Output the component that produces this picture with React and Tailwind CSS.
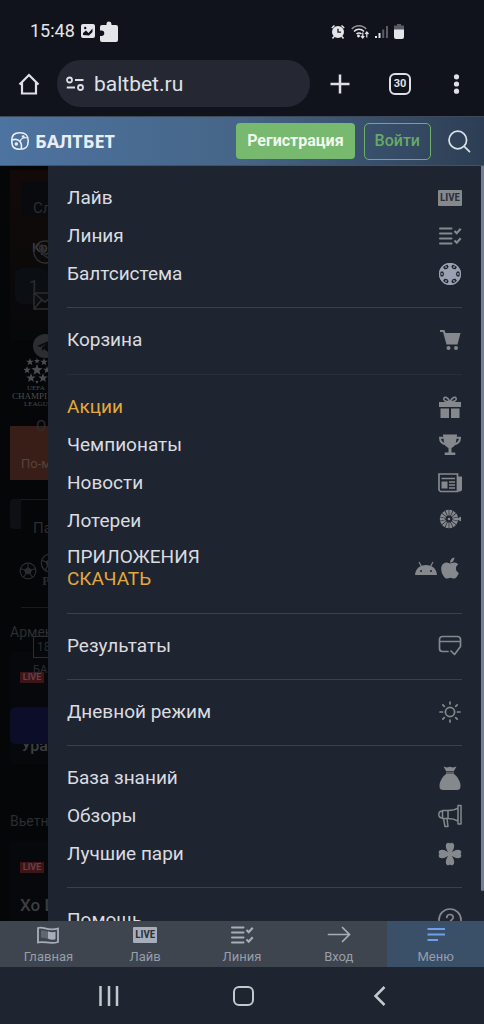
import React from 'react';
import { FaApple } from 'react-icons/fa';
import { clsx } from 'clsx';

const LiveIcon = () => (
    <span className="flex h-4 w-6 items-center justify-center rounded-[1px] bg-current">
        <span className="font-['Liberation_Sans_Narrow','Roboto_Condensed',Roboto,sans-serif] text-[11px] leading-4 font-bold text-[#2b323c]">
            LIVE
        </span>
    </span>
);

const LineIcon = () => (
    <svg className="h-6 w-6" viewBox="0 0 24 24" fill="none" stroke="currentColor" strokeWidth="2.200">
        <path d="M2 4.500h11.500M2 9.500h11.500M2 14.500h11.500M2 19.500h11.500" strokeLinecap="round" strokeWidth="2" />
        <path d="M16.500 7l2.200 2.200 4-4.400M16.500 16.500l2.200 2.200 4-4.400" />
    </svg>
);

const ChipIcon = () => (
    <svg className="h-6 w-6" viewBox="0 0 24 24" fill="none">
        <circle cx="12" cy="12" r="11" fill="#9aa2b1" />
        {[0, 60, 120, 180, 240, 300].map((angle) => (
            <g key={angle} transform={`rotate(${angle} 12 12)`}>
                <path d="M19 9.500h3v5h-3l-1.200-2.500z" fill="#1f2631" />
                <circle cx="20" cy="12" r=".9" fill="#9aa2b1" />
            </g>
        ))}
        <circle cx="12" cy="12" r="10.400" stroke="#9aa2b1" strokeWidth="1.200" />
    </svg>
);

const CartIcon = () => (
    <svg className="h-6 w-6" viewBox="0 0 24 24" fill="currentColor">
        <path d="M2 2h4.300l1.300 3H22.500l-3 11.500H8.500L5 4H2z" />
        <circle cx="10.500" cy="20" r="2" />
        <circle cx="18" cy="20" r="2" />
    </svg>
);

const GiftIcon = () => (
    <svg className="h-6 w-6" viewBox="0 0 24 24" fill="currentColor">
        <path d="M1 7h10v5H1zM13 7h10v5H13zM2.500 13.500H11V23H2.500zM13 13.500h8.500V23H13z" />
        <path d="M11 7h2v5h-2z" />
        <path
            d="M12 7C10 2 6.500 1 5.800 3.500 5.300 6 8 6.700 12 7zM12 7c2-5 5.500-6 6.200-3.500C18.700 6 16 6.700 12 7z"
            fill="none"
            stroke="currentColor"
            strokeWidth="1.600"
        />
    </svg>
);

const TrophyIcon = () => (
    <svg className="h-6 w-6" viewBox="0 0 24 24">
        <path d="M5 1.500h14v2h-.5c0 6.500-1.500 10-5 11.500v4.500h3.800V22H6.700v-2.500h3.800V15C7 13.500 5.500 10 5.500 3.500H5z" fill="currentColor" />
        <path d="M6.500 4.800H2c0 4 2.200 6 6.200 6.800M17.500 4.800H22c0 4-2.200 6-6.200 6.800" fill="none" stroke="currentColor" strokeWidth="2" />
    </svg>
);

const NewsIcon = () => (
    <svg className="h-6 w-6" viewBox="0 0 24 24" fill="none" stroke="currentColor" strokeWidth="1.700">
        <path d="M1 3h18.500v17.500H2.500L1 19z" />
        <path d="M19.500 5.500H24V19l-1.500 1.500h-3z" fill="currentColor" stroke="none" />
        <path d="M3.500 7.500h13.500M11 11h6M11 14h6M11 17h6" />
        <path d="M3.500 10.500h6v7h-6z" fill="currentColor" stroke="none" />
    </svg>
);

const WheelIcon = () => (
    <svg className="h-6 w-6" viewBox="0 0 24 24">
        {Array.from({ length: 14 }, (_, i) => (i * 360) / 14).map((angle) => (
            <path key={angle} d="M14.500 9.500L20 8.300a9.500 9.500 0 0 1 0 3.400l-5.500-1.200z" fill="currentColor" transform={`rotate(${angle} 11 10)`} />
        ))}
        <circle cx="11" cy="10" r="1.300" fill="currentColor" />
        <path d="M18.500 10l4.500-2.500v5z" fill="currentColor" />
    </svg>
);

const AndroidIcon = () => (
    <svg className="h-6 w-6" viewBox="0 0 24 24">
        <path d="M1 19C1.500 12.500 6 9 12 9s10.500 3.500 11 10z" fill="currentColor" />
        <path d="M5 6l2.500 4.500M19 6l-2.500 4.500" stroke="currentColor" strokeWidth="1.200" />
        <circle cx="7" cy="15" r="1" fill="#1f2631" />
        <circle cx="17" cy="15" r="1" fill="#1f2631" />
    </svg>
);

const ResultsIcon = () => (
    <svg className="h-6 w-6" viewBox="0 0 24 24" fill="none" stroke="currentColor" strokeWidth="1.700" strokeLinecap="round" strokeLinejoin="round">
        <path d="M22.500 12V5.500a3 3 0 0 0-3-3h-15a3 3 0 0 0-3 3v9a3 3 0 0 0 3 3H10M1.500 7.500h21M13 17l3.500 3.500 6-8" />
    </svg>
);

const SunIcon = () => (
    <svg className="h-6 w-6" viewBox="0 0 24 24" fill="none" stroke="currentColor" strokeWidth="1.700" strokeLinecap="round">
        <circle cx="12" cy="12" r="4.600" />
        <path d="M12 2v2M12 20v2M2 12h2.500M19.500 12H22M4.800 4.800l1.500 1.500M17.700 17.700l1.500 1.500M4.800 19.200l1.500-1.500M17.700 6.300l1.500-1.500" />
    </svg>
);

const MoneyBagIcon = () => (
    <svg className="h-6 w-6" viewBox="0 0 24 24" fill="currentColor">
        <path d="M5.500.500l3.500 1L12 .8l3 .7 3.500-1-2.500 4.500H8z" />
        <path d="M8 5.500h8V8H8z" opacity=".6" />
        <path d="M8 8h8C20 11 22.500 16 22.500 20c0 3-1.500 4-3.500 4H5c-2 0-3.500-1-3.500-4C1.500 16 4 11 8 8z" />
    </svg>
);

const MegaphoneIcon = () => (
    <svg className="h-6 w-6" viewBox="0 0 24 24" fill="none" stroke="currentColor" strokeWidth="1.500" strokeLinejoin="round">
        <path d="M20 1.500h3v18.500h-3zM20 4c-3 2-6 2.500-10 2.500v8c4 0 7 .8 10 2.500zM10 6.500H4.500v8H10M4.500 7C2 7 .8 8.500.8 10.500S2 14 4.500 14M5.500 14.500l1.500 8h3l-1-8" />
    </svg>
);

const CloverIcon = () => (
    <svg className="h-6 w-6" viewBox="0 0 24 24" fill="currentColor">
        {[0, 90, 180, 270].map((angle) => (
            <path
                key={angle}
                d="M12 12.500C9.500 9.500 7.800 7 7.800 3.800 7.800.500 10.900 0 12 1.500 13.100 0 16.200.500 16.200 3.800c0 3.200-1.700 5.700-4.200 8.700z"
                transform={`rotate(${angle} 12 12)`}
            />
        ))}
        <circle cx="12" cy="12" r="3" />
    </svg>
);

const HelpIcon = () => (
    <svg className="h-6 w-6" viewBox="0 0 24 24" fill="none" stroke="currentColor" strokeWidth="1.700" strokeLinecap="round">
        <circle cx="12" cy="12" r="11" />
        <path d="M8.800 9.500c0-4 6.400-4 6.400 0 0 2.500-3.200 2.300-3.200 5M12 17.800v.2" />
    </svg>
);

const FlagIcon = () => (
    <svg className="h-5 w-6" viewBox="0 0 24 20" fill="none" stroke="currentColor" strokeWidth="1.800">
        <path d="M2 3c6-2 9 3.500 20 .5V17c-8 3-14-1.500-20 .5z" />
        <path d="M5 5.500c4-.5 6 1 8 1.200v7.300c-3-.2-4-1.500-8-1.200z" fill="#5f6772" stroke="none" />
        <path d="M12 6.300c3 1 5 1 7.500.5v7.500c-2.500.5-4.500.5-7.500-.5z" fill="currentColor" stroke="none" />
    </svg>
);

const ArrowIcon = () => (
    <svg className="h-5 w-6" viewBox="0 0 24 20" fill="none" stroke="currentColor" strokeWidth="1.700" strokeLinecap="round">
        <path d="M1.500 9.500h21M15.500 2.500l7 7-7 7" />
    </svg>
);

const MenuIcon = () => (
    <svg className="h-5 w-6" viewBox="0 0 24 20" fill="none" stroke="#6f9fe6" strokeWidth="2">
        <path d="M3.500 4h17.500M3.500 9.500h17.500M3.500 15h10.500" />
    </svg>
);

const LogoIcon = () => (
    <svg className="h-[18px] w-[18px]" viewBox="0 0 18 18" fill="none" stroke="currentColor" strokeWidth="1.600">
        <path d="M9 .8c6 0 8.200 2.200 8.200 8.200S15 17.200 9 17.200.8 15 .8 9 3 .8 9 .8z" />
        <path d="M.8 8C7 6 11.500 9.500 10.300 17" />
        <path d="M9.300 9C9.800 6.500 12.500 5 17 6" strokeWidth="1.200" />
        <circle cx="5.300" cy="12" r="1.800" fill="currentColor" stroke="none" />
        <circle cx="12.200" cy="4.600" r="1.400" fill="currentColor" stroke="none" />
    </svg>
);

const StatusBar = () => (
    <div className="flex h-[60px] items-center bg-[#10131b] pt-0.5 pr-20 pl-[30px] text-[#e4e5e8]">
        <span className="text-[18px] leading-6">15:48</span>
        <svg className="ml-1.5 h-[14px] w-[14px]" viewBox="0 0 14 14">
            <rect width="14" height="14" rx="2" fill="currentColor" />
            <path d="M2 11V9l3-2.500L7.500 9l4-4.500V8L8 11.500z" fill="#10131b" />
            <circle cx="4.200" cy="4" r="1.200" fill="#10131b" />
        </svg>
        <svg className="ml-[5px] h-[21px] w-[18px]" viewBox="0 0 18 21" fill="currentColor">
            <path d="M2 4h4.500V3a2.500 2.500 0 0 1 5 0v1H16a2 2 0 0 1 2 2v13a2 2 0 0 1-2 2H2a2 2 0 0 1-2-2v-4h1.500a2.700 2.700 0 0 0 0-5.500H0V6a2 2 0 0 1 2-2z" />
        </svg>
        <div className="ml-auto flex items-center gap-1.5">
            <svg className="h-[15px] w-[14px]" viewBox="0 0 14 15">
                <circle cx="7" cy="8" r="6" fill="currentColor" />
                <path d="M7 4.800V8.200h3" fill="none" stroke="#10131b" strokeWidth="1.300" />
                <path d="M.8 4L3.500 1.500M13.200 4L10.500 1.500M3 12.500l-1.500 2M11 12.500l1.500 2" stroke="currentColor" strokeWidth="1.500" />
            </svg>
            <svg className="h-[15px] w-[18px]" viewBox="0 0 18 15" fill="none" stroke="currentColor" strokeWidth="1.500">
                <path d="M.8 5C4.500.5 11.500.5 15.200 5" opacity=".6" />
                <path d="M3 7.500c2.800-3 7.200-3 10 0M5.500 10c1.500-1.500 3.500-1.500 5 0" />
                <circle cx="7.500" cy="12" r=".7" fill="currentColor" />
                <path d="M11.800 8.500V14M10 12l1.800 2 1.500-2M15.800 13.500V8M14.200 10l1.600-2 1.700 2" strokeWidth="1.200" />
            </svg>
            <svg className="h-[15px] w-[13px]" viewBox="0 0 13 15" fill="currentColor">
                <path d="M0 12h2v2H0zM3.500 9h2v5h-2z" />
                <path d="M7.200 5.500h2V14h-2zM11 2h2v12h-2z" opacity=".35" />
            </svg>
            <svg className="h-[15px] w-[10px]" viewBox="0 0 10 15" fill="currentColor">
                <path d="M3 0h4v1.500h3V6H0V1.500h3z" opacity=".35" />
                <path d="M0 5.500h10V13a2 2 0 0 1-2 2H2a2 2 0 0 1-2-2z" />
            </svg>
        </div>
    </div>
);

const BrowserBar = () => (
    <div className="flex h-14 items-start bg-[#10131b] text-[#dfe0e6]">
        <button type="button" aria-label="Home" className="flex h-[47px] w-[57px] items-center justify-center">
            <svg className="h-6 w-6" viewBox="0 0 24 24" fill="none" stroke="currentColor" strokeWidth="2.200">
                <path d="M2.500 12.500L12 3l9.500 9.500M5 10.500V21.500h14V10.500" />
            </svg>
        </button>
        <button type="button" className="flex h-[47px] flex-1 items-center rounded-full bg-[#252833] pl-[9px]">
            <svg className="h-[18px] w-[18px]" viewBox="0 0 18 18" fill="none" stroke="currentColor" strokeWidth="1.800">
                <circle cx="3.500" cy="5" r="2.500" />
                <circle cx="14.500" cy="12.500" r="2.500" />
                <path d="M9 5h8.500M.8 12.500H9" />
            </svg>
            <span className="ml-2.5 text-[21px] leading-7">baltbet.ru</span>
        </button>
        <button type="button" aria-label="New tab" className="flex h-[47px] w-[60px] items-center justify-center">
            <svg className="h-5 w-5" viewBox="0 0 20 20" stroke="currentColor" strokeWidth="2.500">
                <path d="M10 .5v19M.5 10h19" />
            </svg>
        </button>
        <button type="button" className="flex h-[47px] w-[60px] items-center justify-center">
            <span className="flex h-[22px] w-[22px] items-center justify-center rounded-[6px] border-2 border-current text-[11px] leading-4 font-bold">
                30
            </span>
        </button>
        <button type="button" aria-label="More" className="flex h-[47px] w-[54px] items-center justify-center">
            <svg className="h-5 w-5" viewBox="0 0 20 20" fill="currentColor">
                <circle cx="9.500" cy="2.800" r="2.600" />
                <circle cx="9.500" cy="10" r="2.600" />
                <circle cx="9.500" cy="17.200" r="2.600" />
            </svg>
        </button>
    </div>
);

const SiteHeader = () => (
    <header className="flex h-[50px] items-center border-y border-t-[#3f4a58] border-b-[#35557b] bg-linear-to-r from-[#4d73a0] via-[#466587] to-[#2d3e54] pr-[13px] pl-[11px]">
        <a href="#" className="flex items-center gap-1.5 text-[#e9eef5]">
            <LogoIcon />
            <span className="font-['Noto_Sans',sans-serif] text-[18px] leading-6 font-bold">БАЛТБЕТ</span>
        </a>
        <button type="button" className="ml-auto h-9 rounded bg-[#77b96e] px-[11px] text-[16px] font-bold text-[#f2f8f1]">
            Регистрация
        </button>
        <button type="button" className="ml-[9px] h-[37px] rounded-[5px] border border-[#6fae6b] px-[10px] text-[16px] font-medium text-[#66aa66]">
            Войти
        </button>
        <button type="button" aria-label="Поиск" className="ml-4 text-[#dbe1e8]">
            <svg className="h-6 w-6" viewBox="0 0 24 24" fill="none" stroke="currentColor" strokeWidth="1.700" strokeLinecap="round">
                <circle cx="10.800" cy="11" r="8.800" />
                <path d="M17.200 17.400l5.300 5.300" />
            </svg>
        </button>
    </header>
);

const BallIcon = ({ className }) => (
    <svg className={className} viewBox="0 0 24 24" fill="none" stroke="currentColor" strokeWidth="1.500">
        <circle cx="12" cy="12" r="10.500" />
        <path d="M12 7.500l4.500 3.200-1.700 5H9.200l-1.700-5z" fill="currentColor" />
        <path d="M12 1.500v6M16.500 10.700l6-2M14.800 15.700l3.500 5M9.200 15.700l-3.500 5M7.500 10.700l-6-2" />
    </svg>
);

const stars = [
    [13, 12, 6],
    [13, 3, 3],
    [20, 4, 4],
    [6, 4, 4],
    [3, 12, 4],
    [23, 12, 4],
    [7, 20, 5],
    [19, 20, 5],
    [13, 24, 2],
];

const StarBallIcon = () => (
    <svg className="ml-[14px] h-[26px] w-[26px]" viewBox="0 0 26 26" fill="currentColor">
        {stars.map(([x, y, r]) => (
            <path
                key={`${x}-${y}`}
                transform={`translate(${x} ${y}) scale(${r})`}
                d="M0-1L.25-.32.95-.31.4.13.59.81 0 .42-.59.81-.4.13-.95-.31-.25-.32z"
            />
        ))}
    </svg>
);

const LiveTag = () => (
    <span className="flex h-[11px] w-6 items-center justify-center bg-[#3d1518] text-[9px] leading-none font-bold text-[#6b4044]">
        LIVE
    </span>
);

// The dimmed page that stays visible to the left of the open drawer
const DimmedPage = () => (
    <div aria-hidden="true" className="relative w-12 shrink-0 overflow-hidden bg-[#050608] whitespace-nowrap text-[#2b2d31]">
        <div className="flex flex-col pl-2.5">
            <div className="mt-1 flex h-[170px] flex-col bg-linear-to-b from-[#120a09] to-[#07080a]">
                <div className="mt-[11px] ml-[11px] h-[35px] rounded-sm bg-[#090a0d]" />
                <div className="mt-6 ml-[22px] text-[13px] leading-4 font-medium text-[#3c3e42]">Кр</div>
                <div className="mt-3 ml-[5px] h-9 rounded-lg bg-[#0b0f13] pl-[14px] text-[17px] leading-9">1</div>
            </div>
            <div className="mt-[18px] flex h-[50px] flex-col font-['Liberation_Serif',serif] text-[#4a4c50]">
                <StarBallIcon />
                <span className="pl-[17px] text-[7px] leading-[8px]">UEFA</span>
                <span className="pl-0.5 text-[9px] leading-[8px]">CHAMPI</span>
                <span className="pl-[14px] text-[7px] leading-[8px]">LEAGU</span>
            </div>
            <div className="mt-[18px] h-[54px] bg-[#391e18] pt-[30px] pl-[11px] text-[13px] leading-4 text-[#57423c]">По-м</div>
            <div className="mt-[19px] flex h-[30px]">
                <div className="w-[11px] rounded-l bg-[#0e1013]" />
                <div className="flex-1 border-t border-[#191b1f]" />
            </div>
            <div className="mt-[22px] flex h-10 items-center pl-[9px]">
                <BallIcon className="h-[18px] w-[18px] shrink-0" />
                <span className="ml-[3px] flex flex-col items-center">
                    <BallIcon className="h-5 w-5" />
                    <b className="pr-2 font-['Liberation_Serif',serif] text-[12px] leading-4">P</b>
                </span>
            </div>
            <div className="mt-4 ml-[11px] border-t border-[#191b1f]" />
            <div className="mt-4 text-[14px] leading-4">Армен</div>
            <div className="mt-3 flex h-[112px] flex-col rounded-l bg-[#07080b]">
                <div className="mt-5 ml-[10px]">
                    <LiveTag />
                </div>
                <div className="mt-6 h-[37px] shrink-0 rounded-l-md bg-[#0c0e29]" />
                <div className="h-4 overflow-hidden pl-[11px] text-[16px] leading-1 font-medium text-[#3c3e42]">Ура</div>
            </div>
            <div className="mt-[49px] text-[14px] leading-4">Вьетн</div>
            <div className="mt-3 h-24 rounded-l bg-[#07080b] pt-[21px] pl-[10px]">
                <LiveTag />
                <div className="mt-[22px] text-[17px] leading-5 font-medium text-[#3c3e42]">Хо Ш</div>
            </div>
        </div>

        {/* Contacts and legal links of the side column */}
        <div className="absolute top-[34px] left-[33px] flex flex-col text-[15px] leading-4">
            <span>Сл</span>
            <svg className="mt-6 h-6 w-6" viewBox="0 0 24 24" fill="none" stroke="currentColor" strokeWidth="1.500">
                <circle cx="12" cy="12" r="11" />
                <path d="M7 6l2-1 2 4-1.500 1.500c1 2 2 3 4 4L15 13l4 2-1 2c-4 3-13-6-11-11z" />
            </svg>
            <svg className="mt-7 h-[18px] w-6" viewBox="0 0 24 18" fill="none" stroke="currentColor" strokeWidth="1.500">
                <path d="M1 1h22v16H1zM1 1l11 9L23 1M1 17l8-9.500M23 17l-8-9.500" />
            </svg>
            <svg className="mt-6 h-6 w-6" viewBox="0 0 24 24">
                <circle cx="12" cy="12" r="12" fill="currentColor" />
                <path d="M4 12l14-6-3 12-4-3-2 2v-3.500l5-4.500-6.500 4z" fill="#0a0b0d" />
            </svg>
            <span className="mt-[60px] pl-[3px]">О</span>
            <span className="mt-[86px]">Па</span>
            <span className="mt-[100px] h-[22px] w-8 border border-current pl-[3px] text-[12px] leading-5">18</span>
            <span className="mt-1.5 text-[11px] leading-3">БА</span>
        </div>
    </div>
);

const menuGroups = [
    {
        items: [
            { label: 'Лайв', icon: <LiveIcon /> },
            { label: 'Линия', icon: <LineIcon /> },
            { label: 'Балтсистема', icon: <ChipIcon /> },
        ],
    },
    { items: [{ label: 'Корзина', icon: <CartIcon /> }], faint: true },
    {
        items: [
            { label: 'Акции', icon: <GiftIcon />, accent: true },
            { label: 'Чемпионаты', icon: <TrophyIcon /> },
            { label: 'Новости', icon: <NewsIcon /> },
            { label: 'Лотереи', icon: <WheelIcon /> },
            {
                label: 'ПРИЛОЖЕНИЯ',
                sub: 'СКАЧАТЬ',
                icon: (
                    <>
                        <AndroidIcon />
                        <FaApple className="h-6 w-6" />
                    </>
                ),
            },
        ],
    },
    { items: [{ label: 'Результаты', icon: <ResultsIcon /> }] },
    { items: [{ label: 'Дневной режим', icon: <SunIcon /> }] },
    {
        items: [
            { label: 'База знаний', icon: <MoneyBagIcon /> },
            { label: 'Обзоры', icon: <MegaphoneIcon /> },
            { label: 'Лучшие пари', icon: <CloverIcon /> },
        ],
    },
    { items: [{ label: 'Помощь', icon: <HelpIcon /> }] },
];

const SideMenu = () => (
    <nav className="flex-1 overflow-hidden bg-[#1f2530] px-[19px]">
        {menuGroups.map((group, index) => (
            <ul
                key={index}
                className={clsx('border-b pt-[13px]', group.faint ? 'border-[#282e38] pb-[15px]' : 'border-[#3a414b] pb-[14px]')}
            >
                {group.items.map((item) => (
                    <li key={item.label}>
                        <a
                            href="#"
                            className={clsx(
                                'flex items-center justify-between text-[19px] leading-[22px]',
                                item.sub ? 'pt-1.5 pb-[9px]' : 'py-2',
                                item.accent ? 'text-[#e3a93c]' : 'text-[#dadce0]'
                            )}
                        >
                            <span>
                                {item.label}
                                {item.sub && <span className="block text-[#e3a93c]">{item.sub}</span>}
                            </span>
                            <span className="-my-1 flex text-[#85888d]">{item.icon}</span>
                        </a>
                    </li>
                ))}
            </ul>
        ))}
    </nav>
);

const tabs = [
    { label: 'Главная', icon: <FlagIcon /> },
    { label: 'Лайв', icon: <LiveIcon /> },
    { label: 'Линия', icon: <LineIcon /> },
    { label: 'Вход', icon: <ArrowIcon /> },
    { label: 'Меню', icon: <MenuIcon />, active: true },
];

const BottomTabs = () => (
    <nav className="grid h-[46px] shrink-0 grid-cols-5 bg-[#3e454e]">
        {tabs.map((tab) => (
            <a
                key={tab.label}
                href="#"
                className={clsx('flex flex-col items-center pt-0.5 text-[#a7aeba]', tab.active && 'bg-[#3a5068]')}
            >
                <span className="flex h-6 items-center">{tab.icon}</span>
                <span className="text-[13px] leading-5 text-[#969eaa]">{tab.label}</span>
            </a>
        ))}
    </nav>
);

const SystemNav = () => (
    <div className="grid h-[57px] shrink-0 grid-cols-3 bg-[#1f2530] pr-[38px] pl-[42px] text-[#c4c7cc]">
        <button type="button" aria-label="Recent apps" className="flex items-center justify-center">
            <svg className="h-5 w-5" viewBox="0 0 20 20" stroke="currentColor" strokeWidth="2.500">
                <path d="M1.500 0v20M10 0v20M18 0v20" />
            </svg>
        </button>
        <button type="button" aria-label="Home screen" className="flex items-center justify-center">
            <span className="h-5 w-[21px] rounded-[6px] border-2 border-current" />
        </button>
        <button type="button" aria-label="Back" className="flex items-center justify-center">
            <svg className="h-5 w-5" viewBox="0 0 20 20" fill="none" stroke="currentColor" strokeWidth="2.500">
                <path d="M15.500 1L6.500 10l9 9" />
            </svg>
        </button>
    </div>
);

export default function App() {
    return (
        <div className="flex h-screen flex-col overflow-hidden bg-[#1f2530] font-[Roboto,sans-serif]">
            <StatusBar />
            <BrowserBar />
            <SiteHeader />
            <main className="flex min-h-0 flex-1">
                <DimmedPage />
                <SideMenu />
                <div className="w-[3px] shrink-0">
                    <div className="h-24/25 rounded-b bg-[#747d92]" />
                </div>
            </main>
            <BottomTabs />
            <SystemNav />
        </div>
    );
}
